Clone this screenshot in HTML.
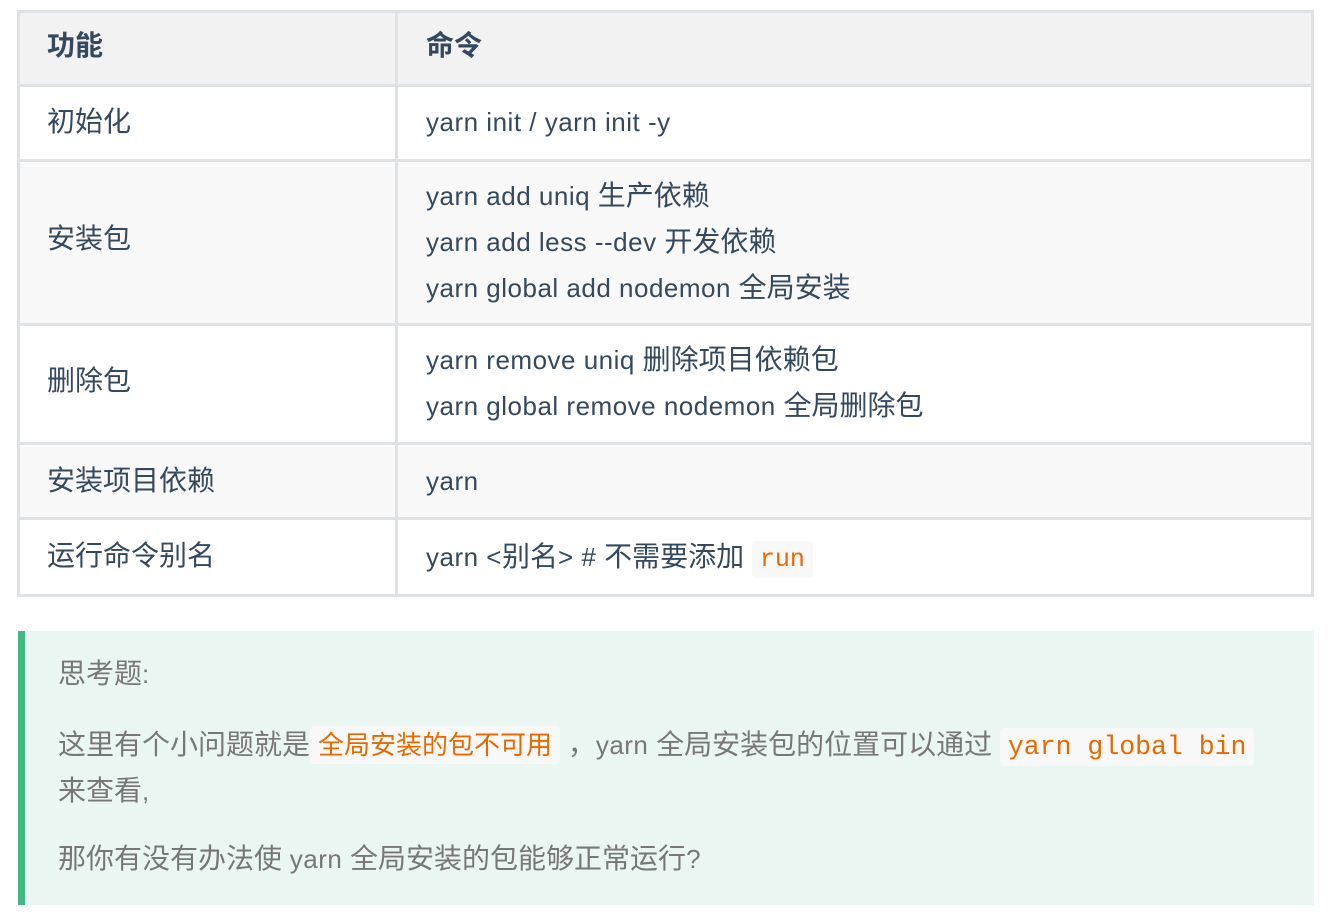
<!DOCTYPE html>
<html><head><meta charset="utf-8"><style>
body{margin:0;width:1330px;height:918px;background:#fff;position:relative;overflow:hidden;font-family:"Liberation Sans","Noto Sans CJK SC",sans-serif;color:#34495e;font-size:28px}
.box{position:absolute;box-sizing:border-box}
.t{position:absolute;white-space:nowrap;line-height:34px}
.l{font-size:26px;letter-spacing:0.5px}
.c{font-family:"Liberation Mono",monospace;color:#e96900;background:#f8f8f8;border-radius:4px;font-size:25px;padding:4px 8px}
.tip{color:#777}
.tip .c{font-size:26.5px}
.o{color:#e96900;background:#f8f8f8;border-radius:4px;padding:4px 8px;font-size:26px}
</style></head><body>
<div class="box" style="left:17px;top:10px;width:1297px;height:587px;border:3px solid #dfe2e5;background:#fff"></div>
<div class="box" style="left:20px;top:13px;width:1291px;height:71px;background:#f2f2f2"></div>
<div class="box" style="left:20px;top:163px;width:1291px;height:160px;background:#f8f8f8"></div>
<div class="box" style="left:20px;top:447px;width:1291px;height:70px;background:#f8f8f8"></div>
<div class="box" style="left:17px;top:84px;width:1297px;height:3px;background:#dfe2e5"></div>
<div class="box" style="left:17px;top:159px;width:1297px;height:3px;background:#dfe2e5"></div>
<div class="box" style="left:17px;top:323px;width:1297px;height:3px;background:#dfe2e5"></div>
<div class="box" style="left:17px;top:442px;width:1297px;height:3px;background:#dfe2e5"></div>
<div class="box" style="left:17px;top:517px;width:1297px;height:3px;background:#dfe2e5"></div>
<div class="box" style="left:395px;top:10px;width:3px;height:587px;background:#dfe2e5"></div>

<div class="t" style="left:47px;top:29px;font-weight:bold">功能</div>
<div class="t" style="left:426px;top:29px;font-weight:bold">命令</div>
<div class="t" style="left:47px;top:105px">初始化</div>
<div class="t" style="left:426px;top:105px"><span class="l">yarn init / yarn init -y</span></div>
<div class="t" style="left:47px;top:222px">安装包</div>
<div class="t" style="left:426px;top:179px"><span class="l">yarn add uniq </span>生产依赖</div>
<div class="t" style="left:426px;top:225px"><span class="l">yarn add less --dev </span>开发依赖</div>
<div class="t" style="left:426px;top:271px"><span class="l">yarn global add nodemon </span>全局安装</div>
<div class="t" style="left:47px;top:364px">删除包</div>
<div class="t" style="left:426px;top:343px"><span class="l">yarn remove uniq </span>删除项目依赖包</div>
<div class="t" style="left:426px;top:389px"><span class="l">yarn global remove nodemon </span>全局删除包</div>
<div class="t" style="left:47px;top:464px">安装项目依赖</div>
<div class="t" style="left:426px;top:464px"><span class="l">yarn</span></div>
<div class="t" style="left:47px;top:539px">运行命令别名</div>
<div class="t" style="left:426px;top:540px"><span class="l">yarn &lt;</span>别名<span class="l">&gt; # </span>不需要添加 <span class="c">run</span></div>

<div class="box" style="left:18px;top:631px;width:1296px;height:274px;background:#eaf6f1;border-left:7px solid #42b983"></div>
<div class="t tip" style="left:58px;top:657px">思考题<span class="l">:</span></div>
<div class="t tip" style="left:58px;top:728px">这里有个小问题就是<span class="o">全局安装的包不可用</span> ，<span class="l">yarn </span>全局安装包的位置可以通过 <span class="c">yarn global bin</span></div>
<div class="t tip" style="left:58px;top:774px">来查看<span class="l">,</span></div>
<div class="t tip" style="left:58px;top:842px">那你有没有办法使<span class="l"> yarn </span>全局安装的包能够正常运行<span class="l">?</span></div>
</body></html>
